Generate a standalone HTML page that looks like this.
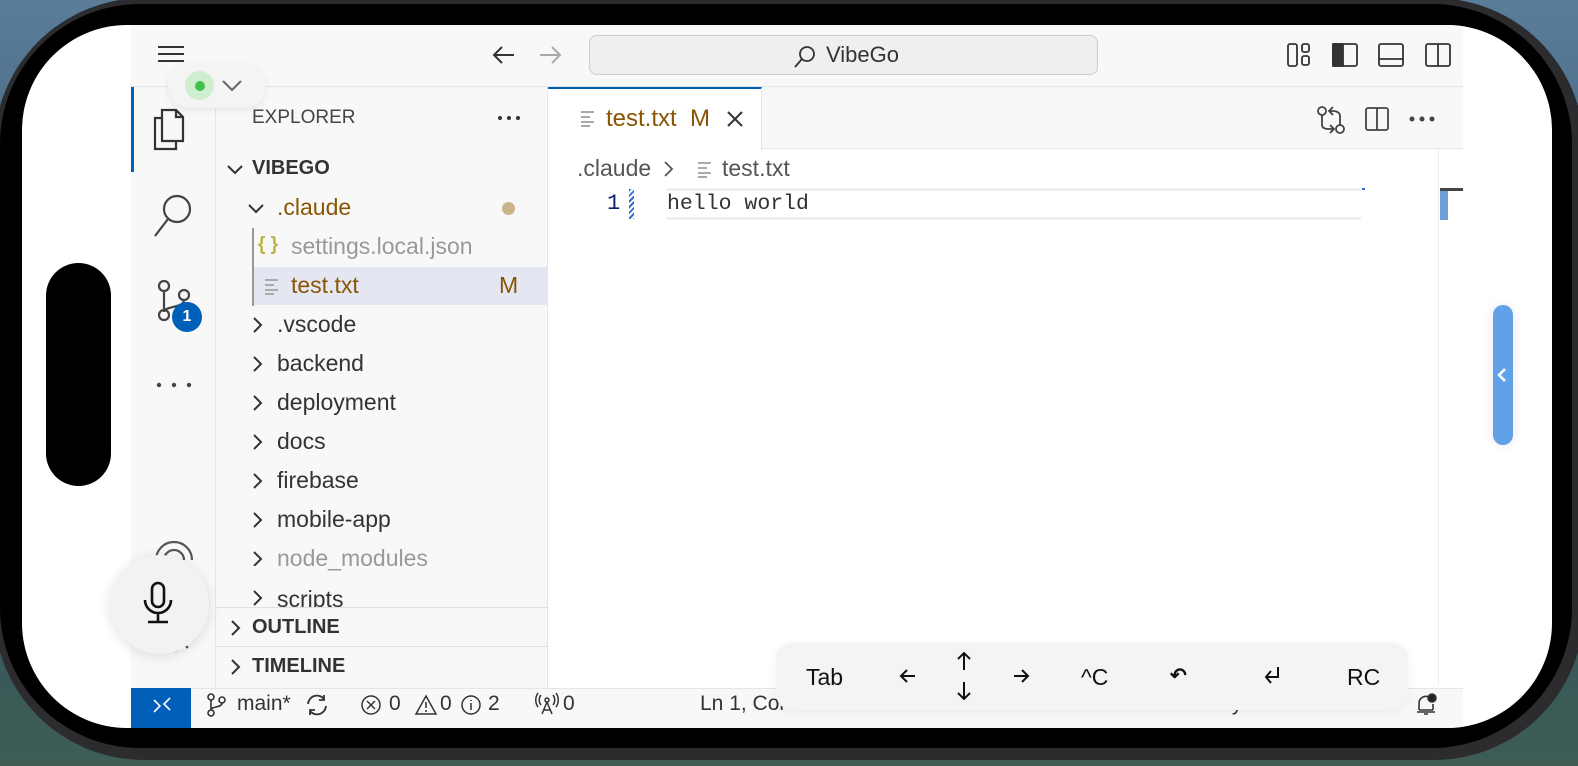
<!DOCTYPE html>
<html><head><meta charset="utf-8"><style>
*{margin:0;padding:0;box-sizing:border-box}
body{width:1578px;height:766px;overflow:hidden;position:relative;font-family:"Liberation Sans",sans-serif;background:linear-gradient(180deg,#5a7d9a 0%,#3e5d73 40%,#35585a 80%,#3f5d55 100%)}
.abs{position:absolute}
.bezel{left:-6px;top:-2px;width:1590px;height:762px;border-radius:150px;background:#2c2c2e}
.frame{left:0px;top:4px;width:1572px;height:744px;border-radius:140px;background:#000}
.screen{left:22px;top:25px;width:1530px;height:703px;border-radius:105px;background:#fff;overflow:hidden}
.t{position:absolute;white-space:nowrap;color:#333;font-size:23px}
svg{position:absolute}
</style></head><body>
<div class="abs bezel"></div>
<div class="abs frame"></div>
<div class="abs screen">
 <div class="abs" style="left:109px;top:0;width:1332px;height:62px;background:#f8f8f8;border-bottom:1px solid #e5e5e5"></div>
 <div class="abs" style="left:109px;top:62px;width:85px;height:601px;background:#f8f8f8;border-right:1px solid #e5e5e5"></div>
 <div class="abs" style="left:109px;top:62px;width:3px;height:85px;background:#005fb8"></div>
 <div class="abs" style="left:194px;top:62px;width:332px;height:601px;background:#f8f8f8;border-right:1px solid #e5e5e5"></div>
 <div class="abs" style="left:526px;top:62px;width:915px;height:62px;background:#f8f8f8;border-bottom:1px solid #e5e5e5"></div>
 <div class="abs" style="left:526px;top:62px;width:214px;height:63px;background:#fff;border-top:2px solid #005fb8;border-right:1px solid #e5e5e5"></div>
 <div class="abs" style="left:109px;top:663px;width:1332px;height:40px;background:#f8f8f8;border-top:1px solid #e5e5e5"></div>
 <div class="abs" style="left:109px;top:663px;width:60px;height:40px;background:#005fb8"></div>
</div>

<div class="abs" style="left:46px;top:263px;width:65px;height:223px;border-radius:33px;background:#000"></div>

<svg style="left:156px;top:44px" width="30" height="20"><g stroke="#333" stroke-width="2"><line x1="2" y1="3" x2="28" y2="3"/><line x1="2" y1="10" x2="28" y2="10"/><line x1="2" y1="17" x2="28" y2="17"/></g></svg>
<svg style="left:490px;top:42px" width="80" height="26" fill="none" stroke-width="2"><path d="M24 13H4M12 5L4 13l8 8" stroke="#333"/><path d="M50 13h20M62 5l8 8-8 8" stroke="#aaa"/></svg>
<div class="abs" style="left:589px;top:35px;width:509px;height:40px;border:1.5px solid #ccc;border-radius:8px;background:#efefef"></div>
<svg style="left:792px;top:44px" width="26" height="26" fill="none" stroke="#333" stroke-width="1.8"><circle cx="15" cy="10" r="7"/><path d="M10 15L3 23"/></svg>
<div class="t" style="left:826px;top:42px;font-size:22px">VibeGo</div>
<svg style="left:1285px;top:41px" width="170" height="28" fill="none" stroke="#333" stroke-width="1.8">
<rect x="3" y="3" width="9" height="22" rx="2"/><rect x="17" y="3" width="7" height="8" rx="2"/><rect x="17" y="15" width="7" height="9" rx="2"/>
<rect x="48" y="3" width="24" height="22" rx="2"/><rect x="48" y="3" width="10" height="22" fill="#333"/>
<rect x="94" y="3" width="24" height="22" rx="2"/><line x1="94" y1="18" x2="118" y2="18"/>
<rect x="141" y="3" width="24" height="22" rx="2"/><line x1="153" y1="3" x2="153" y2="25"/></svg>

<div class="abs" style="left:168px;top:64px;width:98px;height:44px;border-radius:22px;background:#f4f4f4;box-shadow:0 2px 8px rgba(0,0,0,.08)"></div>
<div class="abs" style="left:185px;top:71px;width:29px;height:29px;border-radius:50%;background:#cfeecf"></div>
<div class="abs" style="left:195px;top:81px;width:10px;height:10px;border-radius:50%;background:#3ec24a"></div>
<svg style="left:220px;top:78px" width="24" height="16" fill="none" stroke="#666" stroke-width="2"><path d="M3 3l9 9 9-9"/></svg>

<svg style="left:150px;top:106px" width="44" height="48" fill="none" stroke="#333" stroke-width="2.2"><path d="M12 4h14l7 7v24H12z"/><path d="M26 4v7h7"/><path d="M12 12H5v31h21v-8"/></svg>
<svg style="left:150px;top:190px" width="48" height="50" fill="none" stroke="#444" stroke-width="2.2"><circle cx="27" cy="19" r="13"/><path d="M18 29L5 46"/></svg>
<svg style="left:150px;top:278px" width="50" height="50" fill="none" stroke="#444" stroke-width="2.2"><circle cx="14" cy="8" r="5"/><circle cx="14" cy="37" r="5"/><circle cx="34" cy="17" r="5"/><path d="M14 13v19M34 22c0 8-20 6-20 12"/></svg>
<div class="abs" style="left:172px;top:302px;width:30px;height:30px;border-radius:50%;background:#005fb8;color:#fff;font-size:16px;text-align:center;line-height:30px;font-weight:bold">1</div>
<svg style="left:155px;top:380px" width="40" height="10" fill="#444"><circle cx="4" cy="5" r="2.2"/><circle cx="19" cy="5" r="2.2"/><circle cx="34" cy="5" r="2.2"/></svg>
<svg style="left:150px;top:530px" width="50" height="140" fill="none" stroke="#555" stroke-width="2.2"><path d="M6 30a18 18 0 0 1 36 0"/><path d="M14 30a10 10 0 0 1 20 0"/><path d="M8 110l6 8 6-6 6 8 6-8 6 6"/></svg>

<div class="abs" style="left:110px;top:555px;width:99px;height:99px;border-radius:50%;background:#f2f2f2;box-shadow:0 2px 12px rgba(0,0,0,.12)"></div>
<svg style="left:140px;top:580px" width="40" height="50" fill="none" stroke="#111" stroke-width="2.6"><rect x="12" y="3" width="12" height="24" rx="6"/><path d="M5 20a13 13 0 0 0 26 0M18 33v8M8 42h20"/></svg>

<div class="t" style="left:252px;top:107px;font-size:19px;color:#444">EXPLORER</div>
<svg style="left:497px;top:114px" width="26" height="8" fill="#333"><circle cx="3" cy="4" r="2"/><circle cx="12" cy="4" r="2"/><circle cx="21" cy="4" r="2"/></svg>
<svg style="left:225px;top:160px" width="20" height="20" fill="none" stroke="#333" stroke-width="2"><path d="M3 6l7 7 7-7"/></svg>
<div class="t" style="left:252px;top:157px;font-size:20px;font-weight:bold">VIBEGO</div>
<svg style="left:246px;top:199px" width="20" height="20" fill="none" stroke="#333" stroke-width="2"><path d="M3 6l7 7 7-7"/></svg>
<div class="t" style="left:277px;top:194px;color:#895503">.claude</div>
<div class="abs" style="left:502px;top:202px;width:13px;height:13px;border-radius:50%;background:#c9b38a"></div>
<div class="abs" style="left:252px;top:228px;width:2px;height:78px;background:#999"></div>
<div class="t" style="left:258px;top:234px;color:#b9b63c;font-weight:bold;font-size:19px">{ }</div>
<div class="t" style="left:291px;top:233px;color:#999">settings.local.json</div>
<div class="abs" style="left:254px;top:267px;width:294px;height:38px;background:#e4e6f1"></div>
<svg style="left:264px;top:278px" width="16" height="18" stroke="#aaa" stroke-width="2"><line x1="1" y1="2" x2="14" y2="2"/><line x1="1" y1="7" x2="10" y2="7"/><line x1="1" y1="12" x2="14" y2="12"/><line x1="1" y1="16" x2="10" y2="16"/></svg>
<div class="t" style="left:291px;top:272px;color:#895503">test.txt</div>
<div class="t" style="left:499px;top:272px;color:#895503">M</div>

<svg style="left:250px;top:316px" width="16" height="250" fill="none" stroke="#333" stroke-width="2"><path d="M4 2l7 7-7 7M4 41l7 7-7 7M4 80l7 7-7 7M4 119l7 7-7 7M4 158l7 7-7 7M4 197l7 7-7 7M4 236l7 7-7 7"/></svg>
<svg style="left:250px;top:589px" width="16" height="18" fill="none" stroke="#333" stroke-width="2"><path d="M4 2l7 7-7 7"/></svg>
<div class="t" style="left:277px;top:311px">.vscode</div>
<div class="t" style="left:277px;top:350px">backend</div>
<div class="t" style="left:277px;top:389px">deployment</div>
<div class="t" style="left:277px;top:428px">docs</div>
<div class="t" style="left:277px;top:467px">firebase</div>
<div class="t" style="left:277px;top:506px">mobile-app</div>
<div class="t" style="left:277px;top:545px;color:#999">node_modules</div>
<div class="abs" style="left:216px;top:586px;width:332px;height:21px;overflow:hidden"><div class="t" style="left:61px;top:0px">scripts</div></div>
<div class="abs" style="left:216px;top:607px;width:332px;height:1px;background:#e0e0e0"></div>
<div class="abs" style="left:216px;top:646px;width:332px;height:1px;background:#e0e0e0"></div>
<svg style="left:228px;top:619px" width="16" height="60" fill="none" stroke="#333" stroke-width="2"><path d="M4 2l7 7-7 7M4 41l7 7-7 7"/></svg>
<div class="t" style="left:252px;top:616px;font-size:20px;font-weight:bold">OUTLINE</div>
<div class="t" style="left:252px;top:655px;font-size:20px;font-weight:bold">TIMELINE</div>

<svg style="left:580px;top:110px" width="16" height="18" stroke="#aaa" stroke-width="2"><line x1="1" y1="2" x2="14" y2="2"/><line x1="1" y1="7" x2="10" y2="7"/><line x1="1" y1="12" x2="14" y2="12"/><line x1="1" y1="16" x2="10" y2="16"/></svg>
<div class="t" style="left:606px;top:105px;color:#895503;font-size:24px">test.txt&nbsp; M</div>
<svg style="left:724px;top:108px" width="22" height="22" stroke="#333" stroke-width="2"><path d="M4 4l14 14M18 4L4 18"/></svg>
<svg style="left:1315px;top:104px" width="130" height="32" fill="none" stroke="#444" stroke-width="1.8"><circle cx="7" cy="7" r="4"/><circle cx="25" cy="25" r="4"/><path d="M7 11v10c0 3 3 4 7 4h4M15 21l4 4-4 4M25 21v-9c0-3-3-5-7-5h-3M18 3l-4 4 4 4"/><rect x="51" y="4" width="22" height="22" rx="2"/><line x1="62" y1="4" x2="62" y2="26"/><circle cx="97" cy="15" r="1.6" fill="#444"/><circle cx="107" cy="15" r="1.6" fill="#444"/><circle cx="117" cy="15" r="1.6" fill="#444"/></svg>
<div class="t" style="left:577px;top:155px;color:#555">.claude</div>
<svg style="left:662px;top:160px" width="14" height="18" fill="none" stroke="#555" stroke-width="1.8"><path d="M3 2l7 7-7 7"/></svg>
<svg style="left:697px;top:161px" width="16" height="18" stroke="#aaa" stroke-width="2"><line x1="1" y1="2" x2="14" y2="2"/><line x1="1" y1="7" x2="10" y2="7"/><line x1="1" y1="12" x2="14" y2="12"/><line x1="1" y1="16" x2="10" y2="16"/></svg>
<div class="t" style="left:722px;top:155px;color:#555">test.txt</div>
<div class="abs" style="left:666px;top:188px;width:695px;height:32px;border-top:3px solid #eee;border-bottom:3px solid #eee"></div>
<div class="t" style="left:607px;top:191px;color:#0b216f;font-family:'Liberation Mono',monospace;font-size:22px">1</div>
<div class="abs" style="left:629px;top:189px;width:5px;height:30px;background:repeating-linear-gradient(135deg,#2f6fd0 0 2px,#fff 2px 4px)"></div>
<div class="t" style="left:667px;top:192px;color:#333;font-family:'Liberation Mono',monospace;font-size:21.5px">hello world</div>
<div class="abs" style="left:1438px;top:149px;width:1px;height:537px;background:#eee"></div>
<div class="abs" style="left:1440px;top:188px;width:23px;height:3px;background:#444"></div>
<div class="abs" style="left:1440px;top:191px;width:8px;height:29px;background:#6f9fd8"></div>
<div class="abs" style="left:1362px;top:188px;width:3px;height:2px;background:#2f6fd0"></div>

<div class="abs" style="left:1493px;top:305px;width:20px;height:140px;border-radius:10px;background:#62a0ea;box-shadow:0 0 10px rgba(0,0,0,.1)"></div>
<svg style="left:1495px;top:366px" width="16" height="18" fill="none" stroke="#fff" stroke-width="2.5"><path d="M10 3L4 9l6 6"/></svg>

<svg style="left:150px;top:694px" width="24" height="22" fill="none" stroke="#fff" stroke-width="1.6"><path d="M4 18l6-6-6-6M20 4l-6 6 6 6"/></svg>
<svg style="left:205px;top:693px" width="26" height="24" fill="none" stroke="#333" stroke-width="1.6"><circle cx="6" cy="4" r="3"/><circle cx="6" cy="20" r="3"/><circle cx="17" cy="7" r="3"/><path d="M6 7v10M17 10c0 5-11 3-11 7"/></svg>
<div class="t" style="left:237px;top:692px;font-size:21px">main*</div>
<svg style="left:303px;top:692px" width="28" height="26" fill="none" stroke="#333" stroke-width="1.8"><path d="M5 12a9 9 0 0 1 16-5M23 14a9 9 0 0 1-16 5M21 3v5h-5M7 23v-5h5"/></svg>
<svg style="left:360px;top:694px" width="22" height="22" fill="none" stroke="#333" stroke-width="1.5"><circle cx="11" cy="11" r="9"/><path d="M7 7l8 8M15 7l-8 8"/></svg>
<svg style="left:414px;top:694px" width="24" height="22" fill="none" stroke="#333" stroke-width="1.5"><path d="M12 2l10 18H2z"/><path d="M12 8v6M12 16v2"/></svg>
<svg style="left:460px;top:694px" width="22" height="22" fill="none" stroke="#333" stroke-width="1.5"><circle cx="11" cy="11" r="9"/><path d="M11 9v7M11 6v1"/></svg>
<div class="t" style="left:389px;top:692px;font-size:21px">0</div>
<div class="t" style="left:440px;top:692px;font-size:21px">0</div>
<div class="t" style="left:488px;top:692px;font-size:21px">2</div>
<svg style="left:534px;top:692px" width="26" height="24" fill="none" stroke="#333" stroke-width="1.5"><circle cx="13" cy="8" r="2"/><path d="M13 10l-5 12M13 10l5 12M9 18h8M7 3a8 8 0 0 0 0 10M19 3a8 8 0 0 1 0 10M4 1a12 12 0 0 0 0 14M22 1a12 12 0 0 1 0 14"/></svg>
<div class="t" style="left:563px;top:692px;font-size:21px">0</div>
<div class="t" style="left:700px;top:692px;font-size:21px">Ln 1, Col 12&nbsp;&nbsp;&nbsp;&nbsp;Tab Size: 4&nbsp;&nbsp;&nbsp;&nbsp;UTF-8&nbsp;&nbsp;&nbsp;&nbsp;LF&nbsp;&nbsp;&nbsp;&nbsp;Plain Text&nbsp;&nbsp;&nbsp;&nbsp;Layout: U.S.</div>
<svg style="left:1413px;top:692px" width="26" height="26" fill="none" stroke="#333" stroke-width="1.6"><path d="M6 18V11a7 7 0 0 1 10-6M6 18h14M4 20h18M11 22h4M20 12v6"/><circle cx="19" cy="6" r="4" fill="#222"/></svg>

<div class="abs" style="left:776px;top:643px;width:632px;height:67px;border-radius:16px;background:#f4f4f4;box-shadow:0 2px 10px rgba(0,0,0,.06)"></div>
<div class="t" style="left:806px;top:664px;color:#111">Tab</div>
<svg style="left:898px;top:667px" width="20" height="18" fill="none" stroke="#111" stroke-width="2"><path d="M17 9H3M9 3L3 9l6 6"/></svg>
<svg style="left:955px;top:650px" width="18" height="52" fill="none" stroke="#111" stroke-width="2"><path d="M9 20V3M3 9l6-6 6 6M9 32v17M3 43l6 6 6-6"/></svg>
<svg style="left:1011px;top:667px" width="20" height="18" fill="none" stroke="#111" stroke-width="2"><path d="M3 9h14M11 3l6 6-6 6"/></svg>
<div class="t" style="left:1081px;top:664px;color:#111">^C</div>
<div class="t" style="left:1170px;top:663px;color:#111;font-size:20px;font-weight:bold">↶</div>
<svg style="left:1262px;top:664px" width="22" height="26" fill="none" stroke="#111" stroke-width="2"><path d="M16 3v10H4M9 7l-5 6 5 6"/></svg>
<div class="t" style="left:1347px;top:664px;color:#111">RC</div>
</body></html>
